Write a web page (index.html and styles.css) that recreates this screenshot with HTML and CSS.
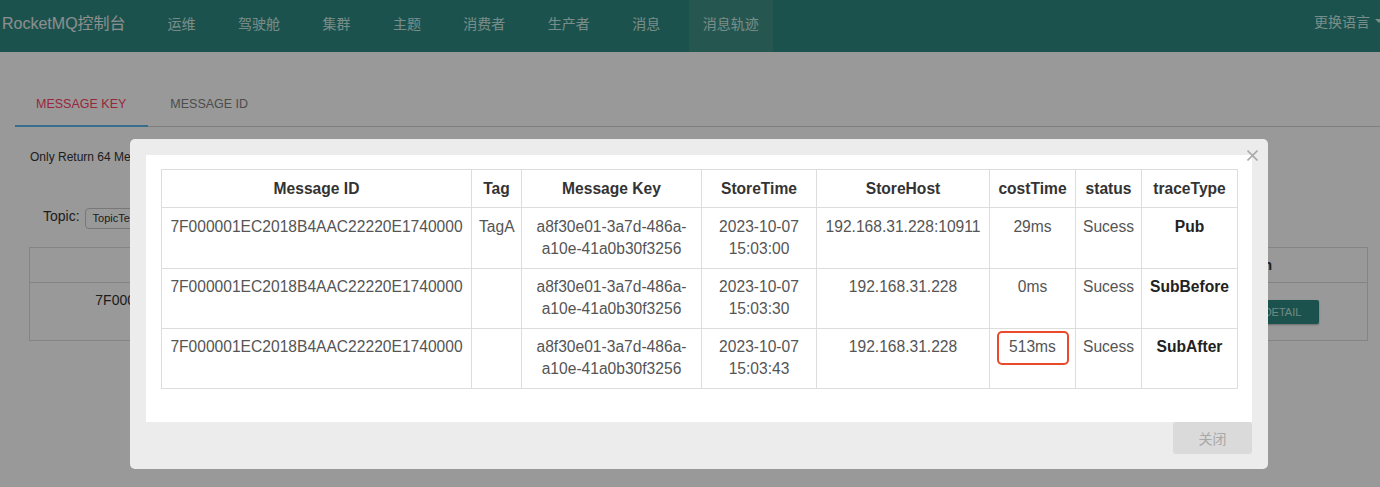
FILE: index.html
```html
<!DOCTYPE html>
<html lang="zh-CN">
<head>
<meta charset="utf-8">
<title>RocketMQ控制台 - 消息轨迹</title>
<link rel="stylesheet" href="styles.css">
</head>
<body>
<header class="navbar">
  <div class="brand">RocketMQ控制台</div>
  <nav class="nav">
    <a class="nav-item">运维</a>
    <a class="nav-item">驾驶舱</a>
    <a class="nav-item">集群</a>
    <a class="nav-item">主题</a>
    <a class="nav-item">消费者</a>
    <a class="nav-item">生产者</a>
    <a class="nav-item">消息</a>
    <a class="nav-item active">消息轨迹</a>
  </nav>
  <div class="lang">更换语言<span class="caret"></span></div>
</header>

<main class="content">
  <div class="tabs">
    <div class="tab active">MESSAGE KEY</div>
    <div class="tab">MESSAGE ID</div>
  </div>
  <p class="hint">Only Return 64 Messages</p>
  <div class="query">
    <label class="query-label">Topic:</label>
    <span class="input">TopicTest</span>
  </div>
  <table class="bg-table">
    <thead>
      <tr><th class="c-id">Message ID</th><th>Tag</th><th>Message Key</th><th>StoreTime</th><th class="c-op">Operation</th></tr>
    </thead>
    <tbody>
      <tr>
        <td class="c-id">7F000001EC2018B4AAC22220E1740000</td>
        <td>TagA</td>
        <td>a8f30e01-3a7d-486a-a10e-41a0b30f3256</td>
        <td>2023-10-07 15:03:00</td>
        <td class="c-op-cell"><span class="btn-detail">DETAIL</span></td>
      </tr>
    </tbody>
  </table>
</main>

<div class="backdrop"></div>

<div class="modal">
  <button class="close" aria-label="close">
    <svg width="11" height="11" viewBox="0 0 11 11"><path d="M0.5 0.5 L10.5 10.5 M10.5 0.5 L0.5 10.5" stroke="#ababab" stroke-width="1.6" fill="none"/></svg>
  </button>
  <div class="modal-body">
    <table class="trace">
      <colgroup>
        <col class="w-id"><col class="w-tag"><col class="w-key"><col class="w-time"><col class="w-host"><col class="w-cost"><col class="w-status"><col class="w-type">
      </colgroup>
      <thead>
        <tr><th>Message ID</th><th>Tag</th><th>Message Key</th><th>StoreTime</th><th>StoreHost</th><th>costTime</th><th>status</th><th>traceType</th></tr>
      </thead>
      <tbody>
        <tr>
          <td class="nowrap">7F000001EC2018B4AAC22220E1740000</td>
          <td>TagA</td>
          <td>a8f30e01-3a7d-486a-a10e-41a0b30f3256</td>
          <td>2023-10-07 15:03:00</td>
          <td class="nowrap">192.168.31.228:10911</td>
          <td>29ms</td>
          <td>Sucess</td>
          <td class="type">Pub</td>
        </tr>
        <tr>
          <td class="nowrap">7F000001EC2018B4AAC22220E1740000</td>
          <td></td>
          <td>a8f30e01-3a7d-486a-a10e-41a0b30f3256</td>
          <td>2023-10-07 15:03:30</td>
          <td class="nowrap">192.168.31.228</td>
          <td>0ms</td>
          <td>Sucess</td>
          <td class="type">SubBefore</td>
        </tr>
        <tr>
          <td class="nowrap">7F000001EC2018B4AAC22220E1740000</td>
          <td></td>
          <td>a8f30e01-3a7d-486a-a10e-41a0b30f3256</td>
          <td>2023-10-07 15:03:43</td>
          <td class="nowrap">192.168.31.228</td>
          <td><span class="mark">513ms</span></td>
          <td>Sucess</td>
          <td class="type">SubAfter</td>
        </tr>
      </tbody>
    </table>
  </div>
  <div class="modal-footer">
    <button class="btn-close">关闭</button>
  </div>
</div>
</body>
</html>
```

FILE: styles.css
```css
* { box-sizing: border-box; }

html, body {
  margin: 0;
  padding: 0;
  width: 1380px;
  height: 487px;
  overflow: hidden;
}

body {
  font-family: "Liberation Sans", "Noto Sans CJK SC", sans-serif;
  color: #333;
  background: #fff;
}

/* ---------- navbar ---------- */
.navbar {
  display: flex;
  height: 52px;
  background: #308980;
  overflow: hidden;
}

.brand {
  height: 44px;
  display: flex;
  align-items: center;
  padding-left: 2px;
  margin-right: 28px;
  font-size: 16px;
  color: #e6efee;
  white-space: nowrap;
}

.nav {
  display: flex;
  gap: 14.45px;
}

.nav-item {
  display: block;
  height: 52px;
  padding: 0 14px 4px;
  line-height: 48px;
  font-size: 14px;
  color: #c8ebe5;
  white-space: nowrap;
}

.nav-item.active {
  background: #3f8f86;
}

.lang {
  margin-left: auto;
  margin-right: -3px;
  height: 42px;
  display: flex;
  align-items: center;
  font-size: 14px;
  color: #c8ebe5;
  white-space: nowrap;
}

.caret {
  display: inline-block;
  margin-left: 5px;
  border-top: 4px solid #c8ebe5;
  border-left: 4px solid transparent;
  border-right: 4px solid transparent;
}

/* ---------- page content (behind modal) ---------- */
.content {
  padding: 0 12px 0 15px;
}

.tabs {
  display: flex;
  margin: 27px -12px 0 0;
  border-bottom: 1px solid #d4d4d4;
}

.tab {
  padding: 4px 22px 0 21px;
  line-height: 42px;
  font-size: 12.5px;
  color: #808080;
  border-bottom: 2px solid transparent;
  margin-bottom: -1px;
}

.tab + .tab {
  padding-left: 22px;
}

.tab.active {
  color: #ff4066;
  border-bottom-color: #5bb9e8;
}

.hint {
  margin: 22px 0 0 15px;
  font-size: 12px;
  line-height: 17px;
  color: #333;
}

.query {
  display: flex;
  align-items: flex-start;
  gap: 5px;
  margin: 42px 0 0 28px;
}

.query-label {
  font-size: 14px;
  line-height: 16px;
  color: #333;
}

.input {
  display: block;
  width: 160px;
  height: 21px;
  padding: 0 7px;
  line-height: 19px;
  font-size: 11px;
  color: #333;
  border: 1px solid #c8c8c8;
  border-radius: 4px;
  background: #fff;
}

.bg-table {
  margin: 18px 0 0 14px;
  width: 1339px;
  border-collapse: collapse;
  font-size: 14px;
  color: #333;
}

.bg-table th,
.bg-table td {
  border: 1px solid #ddd;
  padding: 8px;
  line-height: 18px;
  text-align: center;
  vertical-align: top;
}

.bg-table th {
  height: 35px;
}

.bg-table td {
  height: 58px;
}

.bg-table .c-id {
  width: 394px;
}

.bg-table .c-op {
  width: 170px;
  text-align: left;
  padding-left: 8px;
}

.btn-detail {
  display: inline-block;
  margin-top: 9px;
  width: 72px;
  height: 24px;
  line-height: 24px;
  font-size: 11px;
  color: #b8e4dd;
  background: #308980;
  border-radius: 2px;
  box-shadow: 0 1px 2px rgba(0, 0, 0, 0.3);
}

/* ---------- backdrop + modal ---------- */
.backdrop {
  position: fixed;
  inset: 0;
  background: rgba(0, 0, 0, 0.4);
}

.modal {
  position: fixed;
  left: 130px;
  top: 139px;
  width: 1138px;
  height: 330px;
  padding: 16px 16px 15px;
  background: #ececec;
  border-radius: 5px;
  display: flex;
  flex-direction: column;
}

.close {
  position: absolute;
  right: 10px;
  top: 11px;
  width: 11px;
  height: 11px;
  padding: 0;
  border: 0;
  background: none;
  display: flex;
}

.modal-body {
  background: #fff;
  padding: 14px 15px 0;
  height: 267px;
}

.trace {
  width: 1076px;
  table-layout: fixed;
  border-collapse: collapse;
  font-size: 15.6px;
  color: #555;
}

.w-id { width: 310px; }
.w-tag { width: 50px; }
.w-key { width: 180px; }
.w-time { width: 115px; }
.w-host { width: 173px; }
.w-cost { width: 86px; }
.w-status { width: 66px; }
.w-type { width: 96px; }

.trace th,
.trace td {
  border: 1px solid #ddd;
  padding: 8px 7px;
  text-align: center;
}

.trace th {
  line-height: 21px;
  font-weight: bold;
  color: #333;
  vertical-align: bottom;
}

.trace td {
  line-height: 22px;
  vertical-align: top;
}

.trace tbody tr + tr td {
  padding-top: 7px;
}

.trace .nowrap {
  white-space: nowrap;
}

.trace .type {
  font-weight: bold;
  color: #222;
}

.mark {
  position: relative;
  display: inline-block;
  line-height: 22px;
}

.mark::after {
  content: "";
  position: absolute;
  left: -12px;
  right: -13px;
  top: -5px;
  bottom: -7px;
  border: 2px solid #ea4a2b;
  border-radius: 5px;
}

.modal-footer {
  display: flex;
  justify-content: flex-end;
}

.btn-close {
  width: 79px;
  height: 32px;
  border: 0;
  border-radius: 3px;
  background: #dadada;
  font-family: "Liberation Sans", "Noto Sans CJK SC", sans-serif;
  font-size: 14px;
  color: #a8a8a8;
}
```
